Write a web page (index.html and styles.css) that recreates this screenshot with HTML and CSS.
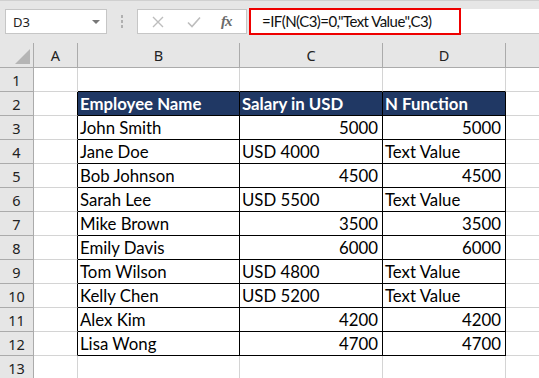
FILE: index.html
```html
<!DOCTYPE html>
<html>
<head>
<meta charset="utf-8">
<link rel="stylesheet" href="styles.css">
</head>
<body>
<div class="app">
  <div class="fbar">
    <div class="namebox"><span class="ref">D3</span><span class="arrow"></span></div>
    <div class="grip"><i></i><i></i><i></i></div>
    <div class="btns">
      <svg class="ico" width="12" height="12" viewBox="0 0 12 12"><path d="M1 1L11 11M11 1L1 11" stroke="#bdbdbd" stroke-width="1.4" fill="none"/></svg>
      <svg class="ico" width="14" height="12" viewBox="0 0 14 12"><path d="M1 6.5L5 10.5L13 1.5" stroke="#bdbdbd" stroke-width="1.6" fill="none"/></svg>
      <span class="fx">fx</span>
    </div>
    <div class="input"><div class="formula">=IF(N(C3)=0,"Text Value",C3)</div></div>
  </div>
  <div class="grid">
    <div class="ch corner"><span class="tri"></span></div>
    <div class="ch">A</div>
    <div class="ch">B</div>
    <div class="ch">C</div>
    <div class="ch">D</div>
    <div class="ch last"></div>
  </div>
  <div id="rows"></div>
</div>
<script src="app.js"></script>
</body>
</html>
```
FILE: styles.css
```css
* { box-sizing: border-box; }
html, body { margin: 0; padding: 0; }
body { width: 539px; height: 378px; overflow: hidden; background: #ffffff; }
.app { width: 539px; }
.fbar {
  height: 43px;
  background: #e6e6e6;
  display: flex;
  align-items: flex-start;
  padding-top: 8px;
  padding-left: 5px;
  border-top: 1px solid #d0d0d0;
}
.namebox {
  width: 102px; height: 25px;
  background: #fff;
  border: 1px solid #c6c6c6;
  display: flex; align-items: center; justify-content: space-between;
  padding: 0 6px 0 7px;
  font-family: "Noto Sans", sans-serif; font-size: 13px; color: #222;
}
.arrow {
  width: 0; height: 0;
  border-left: 4px solid transparent; border-right: 4px solid transparent;
  border-top: 4px solid #777;
}
.grip {
  width: 30px; height: 25px;
  display: flex; flex-direction: column; align-items: center; justify-content: center; gap: 2px;
}
.grip i { width: 2px; height: 3px; background: #b0b0b0; display: block; }
.btns {
  width: 110px; height: 25px;
  background: #fff; border: 1px solid #c6c6c6;
  display: flex; align-items: center;
  padding-left: 14px; gap: 0;
}
.btns .ico:first-child { margin-right: 23px; }
.btns .ico:nth-child(2) { margin-right: 20px; }
.fx {
  font-family: "Liberation Serif", serif; font-style: italic; font-size: 15px; color: #6a6a6a;
  letter-spacing: -1px; font-weight: bold;
}
.input {
  flex: 1; height: 25px; margin-left: 2px;
  background: #fff; border-bottom: 1px solid #c6c6c6;
  position: relative;
}
.formula {
  position: absolute; left: 0; top: -1px;
  width: 212px; height: 27px;
  border: 2px solid #ee0000;
  font-family: Lato, "Liberation Sans", sans-serif; font-size: 15px; color: #111;
  letter-spacing: -0.55px;
  padding-left: 11px; line-height: 22px;
  white-space: nowrap;
}
.grid, .row {
  display: grid;
  grid-template-columns: 34px 44px 162px 143px 123px 1fr;
}
.ch {
  height: 25px;
  background: #e6e6e6;
  border-right: 1px solid #ababab;
  border-bottom: 1px solid #ababab;
  font-family: "Noto Sans", sans-serif; font-size: 14.5px; color: #222;
  display: flex; align-items: center; justify-content: center;
}
.ch.last { border-right: none; }
.corner { position: relative; }
.tri {
  position: absolute; right: 3px; bottom: 3px;
  width: 0; height: 0;
  border-left: 15px solid transparent;
  border-bottom: 15px solid #b5b5b5;
}
.c {
  height: 24px;
  border-right: 1px solid #d4d4d4;
  border-bottom: 1px solid #d4d4d4;
  font-family: Lato, "Liberation Sans", sans-serif; font-size: 16.8px; color: #000;
  display: flex; align-items: center;
  padding: 0 4px 0 2px;
  white-space: nowrap; overflow: hidden;
}
.rh {
  background: #e6e6e6;
  border-right-color: #ababab;
  border-bottom-color: #ababab;
  justify-content: center;
  font-family: "Noto Sans", sans-serif; font-size: 14.5px; color: #222;
  padding: 0;
}
.c.last { border-right: none; }
.c.r { justify-content: flex-end; }
.c.t { border-right-color: #000; border-bottom-color: #000; }
.c.bb { border-bottom-color: #000; }
.c.br { border-right-color: #000; }
.c.h { background: #203864; color: #fff; font-weight: bold; }
```
FILE: app.js
```js
const data = [
  null,
  ["Employee Name", "Salary in USD", "N Function"],
  ["John Smith", 5000, 5000],
  ["Jane Doe", "USD 4000", "Text Value"],
  ["Bob Johnson", 4500, 4500],
  ["Sarah Lee", "USD 5500", "Text Value"],
  ["Mike Brown", 3500, 3500],
  ["Emily Davis", 6000, 6000],
  ["Tom Wilson", "USD 4800", "Text Value"],
  ["Kelly Chen", "USD 5200", "Text Value"],
  ["Alex Kim", 4200, 4200],
  ["Lisa Wong", 4700, 4700],
  null
];
const rows = document.getElementById('rows');
data.forEach((d, i) => {
  const row = document.createElement('div');
  row.className = 'row';
  const rh = document.createElement('div');
  rh.className = 'c rh';
  rh.textContent = i + 1;
  row.appendChild(rh);
  const a = document.createElement('div');
  a.className = 'c' + (d ? ' br' : '');
  row.appendChild(a);
  for (let k = 0; k < 3; k++) {
    const c = document.createElement('div');
    let cls = 'c';
    if (d) {
      cls += ' t';
      if (i === 1) cls += ' h';
      const v = d[k];
      if (typeof v === 'number') cls += ' r';
      c.textContent = v;
    } else if (i === 0) {
      cls += ' bb';
    }
    c.className = cls;
    row.appendChild(c);
  }
  const e = document.createElement('div');
  e.className = 'c last';
  row.appendChild(e);
  rows.appendChild(row);
});
```
